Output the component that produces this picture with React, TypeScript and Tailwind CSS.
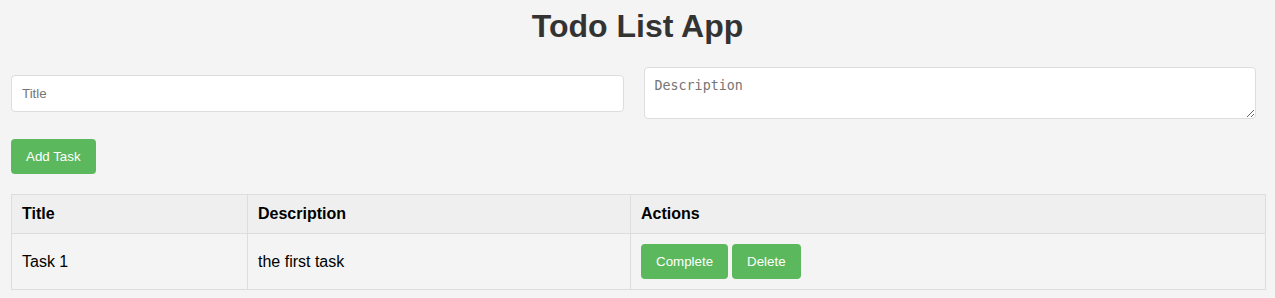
import { useState } from 'react';

type Task = { title: string; description: string; done: boolean };

export default function App() {
    const [title, setTitle] = useState('')
    const [description, setDescription] = useState('')
    const [tasks, setTasks] = useState<Task[]>([
        { title: 'Task 1', description: 'the first task', done: false },
    ])

    const addTask = () => {
        if (!title.trim()) return
        setTasks([...tasks, { title, description, done: false }])
        setTitle('')
        setDescription('')
    }

    const btn = "bg-[#5cb85c] text-white text-[13.33px] rounded-[4px] px-[15px] leading-[15px] cursor-pointer"

    return (
        <div className="min-h-screen bg-[#f4f4f4] font-['Liberation_Sans',Arial,sans-serif] pt-[8px] pb-[8px]">
            <h1 className="text-center text-[32px] leading-[37px] font-bold text-[#333]">Todo List App</h1>

            <div className="mt-[22px] ml-[11px] w-[1245px] flex items-center gap-[20px]">
                <input
                    value={title}
                    onChange={(e) => setTitle(e.target.value)}
                    placeholder="Title"
                    className="flex-1 h-[37px] px-[10px] bg-white border border-[#ddd] rounded-[4px] text-[13.33px] text-black placeholder:text-[#757575] outline-none"
                />
                <textarea
                    value={description}
                    onChange={(e) => setDescription(e.target.value)}
                    placeholder="Description"
                    className="flex-1 h-[52px] p-[10px] bg-white border border-[#ddd] rounded-[4px] text-[13.33px] leading-[16px] font-['DejaVu_Sans_Mono',monospace] text-black placeholder:text-[#757575] outline-none resize-y"
                />
            </div>

            <div className="mt-[20px] ml-[11px]">
                <button onClick={addTask} className={btn + " h-[35px]"}>Add Task</button>
            </div>

            <table className="mt-[20px] ml-[11px] w-[1255px] border-collapse text-[16px] text-black">
                <colgroup>
                    <col className="w-[236px]" />
                    <col className="w-[383px]" />
                    <col />
                </colgroup>
                <thead>
                    <tr className="bg-[#efefef] h-[39px]">
                        <th className="border border-[#ddd] px-[10px] text-left font-bold">Title</th>
                        <th className="border border-[#ddd] px-[10px] text-left font-bold">Description</th>
                        <th className="border border-[#ddd] px-[10px] text-left font-bold">Actions</th>
                    </tr>
                </thead>
                <tbody>
                    {tasks.map((t, i) => (
                        <tr key={i} className="h-[56px]">
                            <td className={"border border-[#ddd] px-[10px]" + (t.done ? " line-through" : "")}>{t.title}</td>
                            <td className="border border-[#ddd] px-[10px]">{t.description}</td>
                            <td className="border border-[#ddd] px-[10px]">
                                <div className="flex gap-[4px]">
                                    <button
                                        onClick={() => setTasks(tasks.map((x, j) => j === i ? { ...x, done: !x.done } : x))}
                                        className={btn + " h-[35px]"}
                                    >
                                        Complete
                                    </button>
                                    <button
                                        onClick={() => setTasks(tasks.filter((_, j) => j !== i))}
                                        className={btn + " h-[35px]"}
                                    >
                                        Delete
                                    </button>
                                </div>
                            </td>
                        </tr>
                    ))}
                </tbody>
            </table>
        </div>
    )
}
